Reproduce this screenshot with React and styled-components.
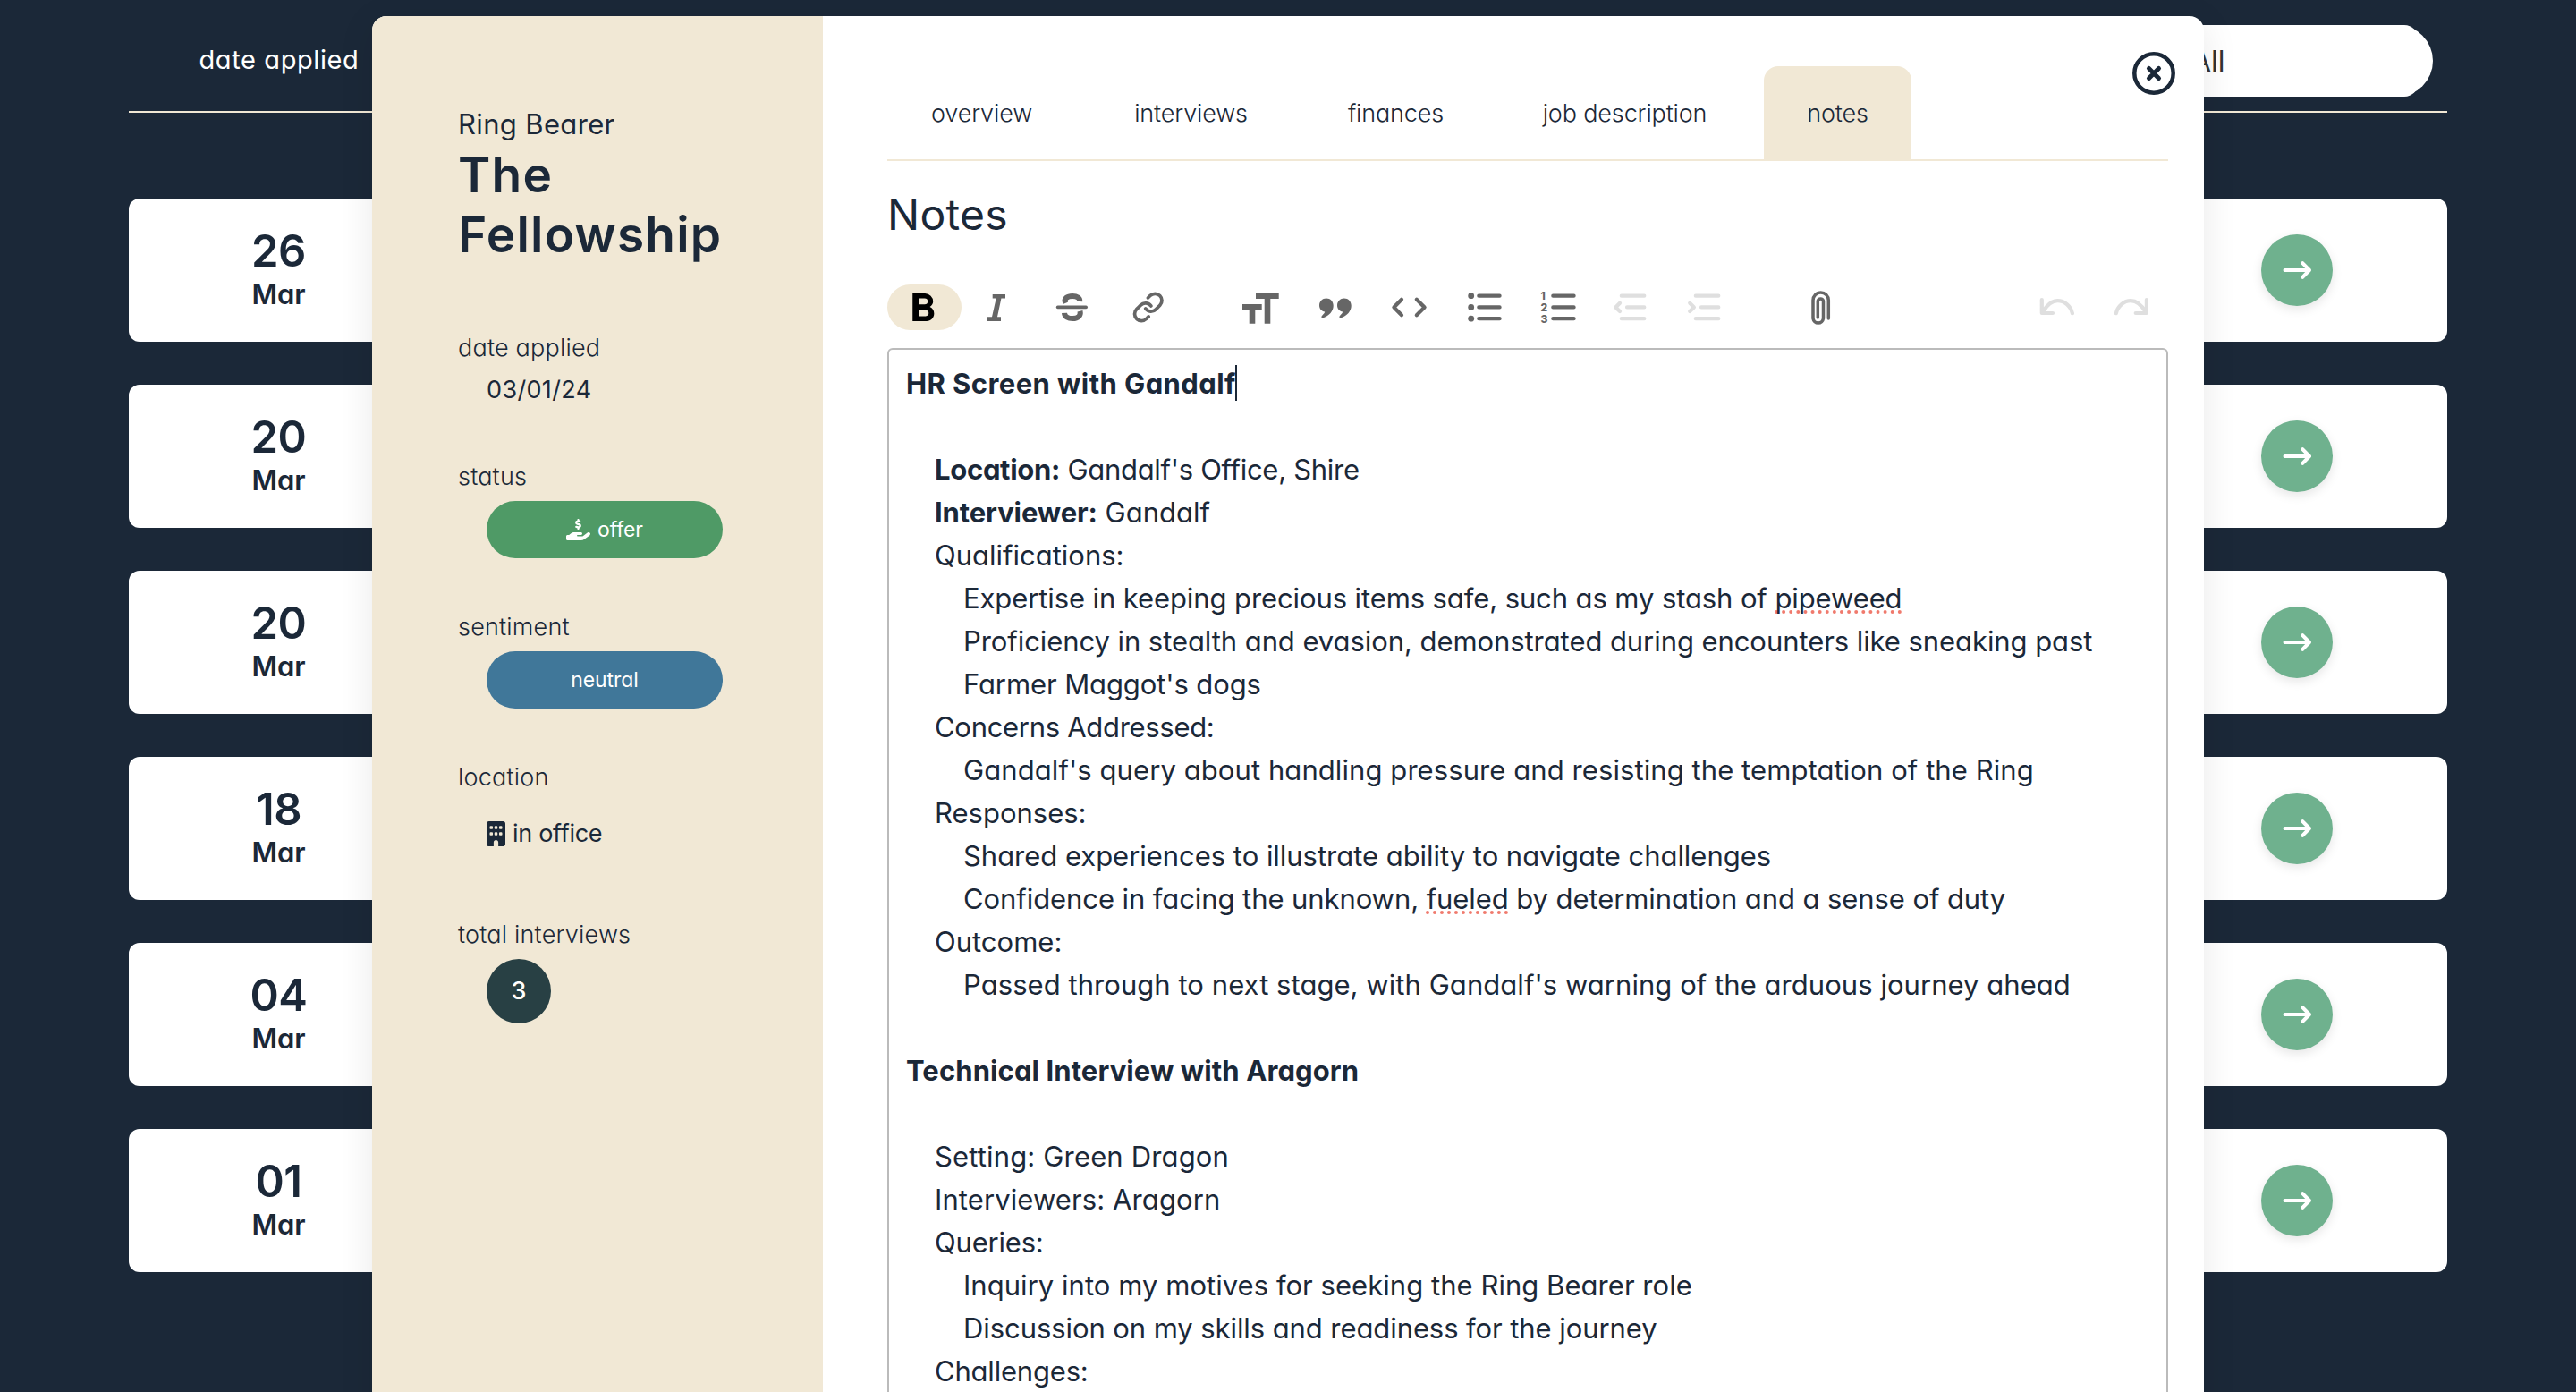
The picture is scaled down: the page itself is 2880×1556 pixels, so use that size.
import React from 'react'
import styled, { createGlobalStyle } from 'styled-components'
import { FaBuilding, FaHandHoldingDollar } from 'react-icons/fa6'

const GlobalStyle = createGlobalStyle`
  * {
    box-sizing: border-box;
  }
  body {
    margin: 0;
    background-color: #1b2838;
    color: #1b2838;
    font-family: Inter, 'Open Sans', sans-serif;
    font-feature-settings: 'cv11';
  }
`

const Page = styled.div`
  position: relative;
  height: 1556px;
  padding: 0 144px;
  overflow: hidden;
`
const ListHeader = styled.header`
  display: flex;
  align-items: center;
  justify-content: space-between;
  height: 126px;
  padding: 12px 16px 0 0;
  border-bottom: 2px solid #f1e8d5;
`
const HeaderLabel = styled.span`
  width: 336px;
  padding-bottom: 3px;
  text-align: center;
  color: white;
  font-size: 29px;
  letter-spacing: 0.6px;
`
const Filter = styled.div`
  width: 320px;
  height: 80px;
  padding-right: 16px;
  border-radius: 40px;
  background-color: white;
`
const FilterValue = styled.div`
  display: flex;
  align-items: center;
  height: 80px;
  padding-left: 50px;
  border-radius: 16px;
  background-color: white;
  color: #333333;
  font-size: 32px;
`
const Jobs = styled.main`
  display: flex;
  flex-direction: column;
  gap: 48px;
  margin-top: 96px;
`
const JobCard = styled.article`
  display: flex;
  justify-content: space-between;
  align-items: center;
  height: 160px;
  border-radius: 12px;
  background-color: white;
`
const JobDate = styled.div`
  display: flex;
  flex-direction: column;
  align-items: center;
  width: 335px;
  padding-top: 4px;
`
const Day = styled.span`
  font-size: 49px;
  font-weight: 570;
  line-height: 50px;
  letter-spacing: -0.5px;
`
const Month = styled.span`
  font-size: 31px;
  font-weight: 600;
  line-height: 46px;
`
const OpenButton = styled.button`
  display: flex;
  align-items: center;
  justify-content: center;
  width: 80px;
  height: 80px;
  margin-right: 128px;
  padding: 0;
  border: none;
  border-radius: 50%;
  background-color: #6fb18e;
  box-shadow: 0 4px 12px rgba(0, 0, 0, 0.1);
`

const Modal = styled.section`
  position: absolute;
  top: 18px;
  left: 416px;
  display: flex;
  width: 2048px;
  height: 1700px;
  border-radius: 16px;
  overflow: hidden;
  background-color: white;
  box-shadow: 0 8px 40px rgba(0, 0, 0, 0.09);
`
const Sidebar = styled.aside`
  width: 504px;
  padding: 98px 80px 0 96px;
  background-color: #f1e8d5;
`
const Position = styled.p`
  margin: 0;
  font-size: 31px;
  line-height: 46px;
  letter-spacing: 0.35px;
`
const Company = styled.h1`
  margin: 0 0 68px;
  font-size: 55px;
  font-weight: 580;
  line-height: 67px;
  letter-spacing: 1.2px;
`
const Details = styled.div`
  display: flex;
  flex-direction: column;
  gap: 48px;
`
const Label = styled.div`
  padding-top: 1px;
  font-size: 27px;
  font-weight: 340;
  line-height: 47px;
  letter-spacing: 0.2px;
`
const Value = styled.div`
  display: flex;
  align-items: center;
  gap: 8px;
  margin: ${props => props.$space || 0}px 0 ${props => props.$space || 0}px 32px;
  font-size: 27px;
  line-height: 48px;
  letter-spacing: ${props => props.$track || 0}px;
`
const OfficeIcon = styled(FaBuilding)`
  width: 21px;
  height: 28px;
`
const OfferIcon = styled(FaHandHoldingDollar)`
  width: 27px;
  height: 24px;
`
const Pill = styled.span`
  display: flex;
  align-items: center;
  justify-content: center;
  gap: 8px;
  width: 264px;
  height: 64px;
  border-radius: 32px;
  background-color: ${props => props.$color};
  color: white;
  font-size: 23px;
  letter-spacing: -0.1px;
`
const Count = styled.span`
  width: 72px;
  border-radius: 50%;
  background-color: #284044;
  color: white;
  font-weight: 450;
  line-height: 72px;
  text-align: center;
`

const Content = styled.div`
  flex: 1;
  display: flex;
  flex-direction: column;
  padding: 56px 40px 0 72px;
`
const CloseButton = styled.button`
  position: absolute;
  top: 40px;
  right: 32px;
  width: 48px;
  height: 48px;
  padding: 0;
  border: none;
  background: none;
`
const Tabs = styled.nav`
  display: flex;
  gap: 16px;
  border-bottom: 2px solid #f1e8d5;
`
const Tab = styled.span`
  width: ${props => props.$width}px;
  padding-top: 2px;
  border-radius: 16px 16px 0 0;
  background-color: ${props => (props.$active ? '#f1e8d5' : 'transparent')};
  font-size: 27px;
  font-weight: 300;
  line-height: 102px;
  letter-spacing: -0.15px;
  text-align: center;
  white-space: nowrap;
`
const Title = styled.h2`
  margin: 30px 0 48px;
  font-size: 48px;
  font-weight: 400;
  line-height: 60px;
  letter-spacing: 0.3px;
`
const Toolbar = styled.div`
  display: flex;
  gap: 44px;
  margin-bottom: 20px;
`
const ToolGroup = styled.div`
  display: flex;
  margin-left: ${props => (props.$end ? 'auto' : 0)};
`
const ToolButton = styled.button`
  width: 83px;
  height: 51px;
  padding: 0;
  border: none;
  border-radius: 26px;
  background-color: ${props => (props.$active ? '#f1e8d5' : 'transparent')};
  color: ${props => (props.$active ? 'black' : props.$disabled ? '#dfdfdf' : '#666666')};
`
const ToolIcon = styled.svg`
  display: block;
  fill: none;
  stroke: currentColor;
  stroke-width: 4.2;
  stroke-linecap: round;
  stroke-linejoin: round;

  .solid {
    fill: currentColor;
    stroke: none;
  }
  text {
    fill: currentColor;
    stroke: none;
    font: 800 12px Inter, sans-serif;
  }
`
const Editor = styled.div`
  flex: 1;
  padding: 14px 19px;
  border: 2px solid #bbbbbb;
  border-radius: 6px;
`
const Line = styled.div`
  min-height: 48px;
  padding-left: ${props => (props.$indent || 0) * 32}px;
  font-size: 31px;
  line-height: 48px;
  letter-spacing: ${props => props.$track || 0}px;
  white-space: nowrap;
`
const Strong = styled.strong`
  font-weight: 700;
  letter-spacing: ${props => props.$track || 0}px;
`
const Misspelled = styled.span`
  text-decoration: underline dotted #f07a6d 4px;
  text-decoration-skip-ink: none;
  text-underline-offset: 2px;
`
const Caret = styled.span`
  display: inline-block;
  width: 2px;
  height: 40px;
  margin: 0 -2px 0 -1px;
  vertical-align: -8px;
  background-color: #1b2838;
`

const jobDates = ['26', '20', '20', '18', '04', '01']

const tabs = [
  { name: 'overview', width: 211 },
  { name: 'interviews', width: 225 },
  { name: 'finances', width: 201 },
  { name: 'job description', width: 279 },
  { name: 'notes', width: 165 },
]

const toolGroups = [
  ['bold', 'italic', 'strike', 'link'],
  ['heading', 'quote', 'code', 'bullets', 'numbers', 'outdent', 'indent'],
  ['attach'],
  ['undo', 'redo'],
]
const disabledTools = ['outdent', 'indent', 'undo', 'redo']

const quoteMark =
  'M7.8 15.6c4.6 0 7.9 3.4 7.9 8.2 0 6-4.7 11.2-11.2 13.4-1.7.6-2.9-1-1.5-2.3 1.9-1.7 2.9-3 3.2-4.3C2.7 30 0 27.2 0 23.6c0-4.6 3.4-8 7.8-8z'
const curvedArrow = 'M24.8 17v15H37M25.8 31C31 22 37 18.2 42.5 18.2c7.5 0 14.5 5.8 16.4 14'
const listLines = 'M36.3 12.7h23.3M36.3 25.4h23.3M36.3 38.2h23.3'
const indentLines = 'M29.8 12.7h25.5M36 25.4h19.3M29.8 38.2h25.5'

// all drawn on the 83x51 area of a toolbar button
const icons = {
  bold: (
    <path
      className="solid"
      transform="translate(12.5 -0.9) scale(2.25 2.2)"
      d="M15.6 11.8c1-.7 1.6-1.8 1.6-2.8a4 4 0 0 0-4-4H7v14h7c2.1 0 3.7-1.7 3.7-3.8 0-1.5-.8-2.8-2.1-3.4zM10 7.5h3a1.5 1.5 0 1 1 0 3h-3v-3zm3.5 9H10v-3h3.5a1.5 1.5 0 1 1 0 3z"
    />
  ),
  italic: <path className="solid" d="M34.7 11H49v4.5h-4.6L40 36.3h4V41H29v-4.7h5l4.7-20.8h-4z" />,
  strike: (
    <>
      <path d="M24.6 25.4h31.6" strokeWidth="3.6" />
      <path
        strokeLinecap="butt"
        strokeWidth="6"
        d="M33.2 20.8C31 15.5 35.5 13 41 13c5.2 0 8.6 2 8.2 6M32 31.8c.2 4.2 4 6.2 9.2 6.2 6.3 0 9.5-3.2 8.3-8.2"
      />
    </>
  ),
  link: (
    <g transform="translate(24.4 7.1) scale(1.53)" strokeWidth="2.45">
      <path d="M10 13a5 5 0 0 0 7.54.54l3-3a5 5 0 0 0-7.07-7.07l-1.72 1.71" />
      <path d="M14 11a5 5 0 0 0-7.54-.54l-3 3a5 5 0 0 0 7.07 7.07l1.71-1.71" />
    </g>
  ),
  heading: (
    <path
      className="solid"
      d="M36 9.3h25.7V16h-9.4v27.7h-6.6V16H36zM21 22h21.7v7h-7.4v14.7h-6.6V29H21z"
    />
  ),
  quote: (
    <>
      <path className="solid" transform="translate(24 0)" d={quoteMark} />
      <path className="solid" transform="translate(44 0)" d={quoteMark} />
    </>
  ),
  code: <path d="M33 16.7l-8.6 8.8 8.6 8.7M49.8 16.7l8.8 8.8-8.8 8.7" />,
  bullets: (
    <>
      <circle className="solid" cx="27.7" cy="12.7" r="3.4" />
      <circle className="solid" cx="27.7" cy="25.4" r="3.4" />
      <circle className="solid" cx="27.7" cy="38.2" r="3.4" />
      <path d={listLines} />
    </>
  ),
  numbers: (
    <>
      <text x="22.5" y="17">1</text>
      <text x="22.5" y="29.7">2</text>
      <text x="22.5" y="42.5">3</text>
      <path d={listLines} />
    </>
  ),
  outdent: <path d={indentLines + 'M28 20.7l-4.7 4.7 4.7 4.7'} />,
  indent: <path d={indentLines + 'M23.2 20.7l4.7 4.7-4.7 4.7'} />,
  attach: (
    <path
      strokeWidth="3.5"
      d="M51.3 38V17.6a8.6 8.6 0 0 0-17.3 0V38a5.8 5.8 0 0 0 11.5 0V19a3.1 3.1 0 0 0-6.2 0v18"
    />
  ),
  undo: <path d={curvedArrow} />,
  redo: <path transform="translate(83.7 0) scale(-1 1)" d={curvedArrow} />,
}

function JobList() {
  return (
    <>
      <ListHeader>
        <HeaderLabel>date applied</HeaderLabel>
        <Filter>
          <FilterValue>All</FilterValue>
        </Filter>
      </ListHeader>
      <Jobs>
        {jobDates.map((day, i) => (
          <JobCard key={i}>
            <JobDate>
              <Day>{day}</Day>
              <Month>Mar</Month>
            </JobDate>
            <OpenButton>
              <svg width="34" height="24" fill="none" stroke="white" strokeWidth="4" strokeLinecap="round" strokeLinejoin="round">
                <path d="M3.5 12H31M23.3 4.2L31 12l-7.7 7.8" />
              </svg>
            </OpenButton>
          </JobCard>
        ))}
      </Jobs>
    </>
  )
}

function JobSummary() {
  return (
    <Sidebar>
      <Position>Ring Bearer</Position>
      <Company>
        The
        <br />
        Fellowship
      </Company>
      <Details>
        <div>
          <Label>date applied</Label>
          <Value $track={0.35}>03/01/24</Value>
        </div>
        <div>
          <Label>status</Label>
          <Value $space={4}>
            <Pill $color="#4f9a66">
              <OfferIcon />
              offer
            </Pill>
          </Value>
        </div>
        <div>
          <Label>sentiment</Label>
          <Value $space={4}>
            <Pill $color="#407799">neutral</Pill>
          </Value>
        </div>
        <div>
          <Label>location</Label>
          <Value $space={16} $track={-0.3}>
            <OfficeIcon />
            in office
          </Value>
        </div>
        <div>
          <Label>total interviews</Label>
          <Value $space={4}>
            <Count>3</Count>
          </Value>
        </div>
      </Details>
    </Sidebar>
  )
}

function NotesToolbar() {
  return (
    <Toolbar>
      {toolGroups.map((group, i) => (
        <ToolGroup key={i} $end={i === 3}>
          {group.map(tool => (
            <ToolButton key={tool} $active={tool === 'bold'} $disabled={disabledTools.includes(tool)}>
              <ToolIcon width="83" height="51" viewBox="0 0 83 51">
                {icons[tool]}
              </ToolIcon>
            </ToolButton>
          ))}
        </ToolGroup>
      ))}
    </Toolbar>
  )
}

function NotesEditor() {
  return (
    <Editor>
      <Line>
        <Strong $track={0.42}>HR Screen with Gandalf</Strong>
        <Caret />
      </Line>
      <Line />
      <Line $indent={1} $track={-0.3}>
        <Strong $track={-0.3}>Location:</Strong> Gandalf's Office, Shire
      </Line>
      <Line $indent={1}>
        <Strong $track={-0.1}>Interviewer:</Strong> Gandalf
      </Line>
      <Line $indent={1}>Qualifications:</Line>
      <Line $indent={2} $track={-0.1}>
        Expertise in keeping precious items safe, such as my stash of <Misspelled>pipeweed</Misspelled>
      </Line>
      <Line $indent={2} $track={-0.07}>
        Proficiency in stealth and evasion, demonstrated during encounters like sneaking past
      </Line>
      <Line $indent={2} $track={-0.1}>Farmer Maggot's dogs</Line>
      <Line $indent={1} $track={-0.3}>Concerns Addressed:</Line>
      <Line $indent={2} $track={0.08}>
        Gandalf's query about handling pressure and resisting the temptation of the Ring
      </Line>
      <Line $indent={1}>Responses:</Line>
      <Line $indent={2} $track={-0.03}>Shared experiences to illustrate ability to navigate challenges</Line>
      <Line $indent={2} $track={-0.08}>
        Confidence in facing the unknown, <Misspelled>fueled</Misspelled> by determination and a sense of duty
      </Line>
      <Line $indent={1}>Outcome:</Line>
      <Line $indent={2} $track={0.05}>
        Passed through to next stage, with Gandalf's warning of the arduous journey ahead
      </Line>
      <Line />
      <Line>
        <Strong $track={0.1}>Technical Interview with Aragorn</Strong>
      </Line>
      <Line />
      <Line $indent={1} $track={0.15}>Setting: Green Dragon</Line>
      <Line $indent={1} $track={0.1}>Interviewers: Aragorn</Line>
      <Line $indent={1} $track={-0.2}>Queries:</Line>
      <Line $indent={2} $track={0.04}>Inquiry into my motives for seeking the Ring Bearer role</Line>
      <Line $indent={2} $track={-0.08}>Discussion on my skills and readiness for the journey</Line>
      <Line $indent={1} $track={-0.2}>Challenges:</Line>
    </Editor>
  )
}

export default function App() {
  return (
    <Page>
      <GlobalStyle />
      <JobList />
      <Modal>
        <JobSummary />
        <Content>
          <Tabs>
            {tabs.map(tab => (
              <Tab key={tab.name} $width={tab.width} $active={tab.name === 'notes'}>
                {tab.name}
              </Tab>
            ))}
          </Tabs>
          <Title>Notes</Title>
          <NotesToolbar />
          <NotesEditor />
        </Content>
        <CloseButton>
          <svg width="48" height="48" fill="none" stroke="#1b2838" strokeLinecap="round">
            <circle cx="24" cy="24" r="21.7" strokeWidth="4.5" />
            <path d="M18.5 18.5l11 11M29.5 18.5l-11 11" strokeWidth="5" />
          </svg>
        </CloseButton>
      </Modal>
    </Page>
  )
}
